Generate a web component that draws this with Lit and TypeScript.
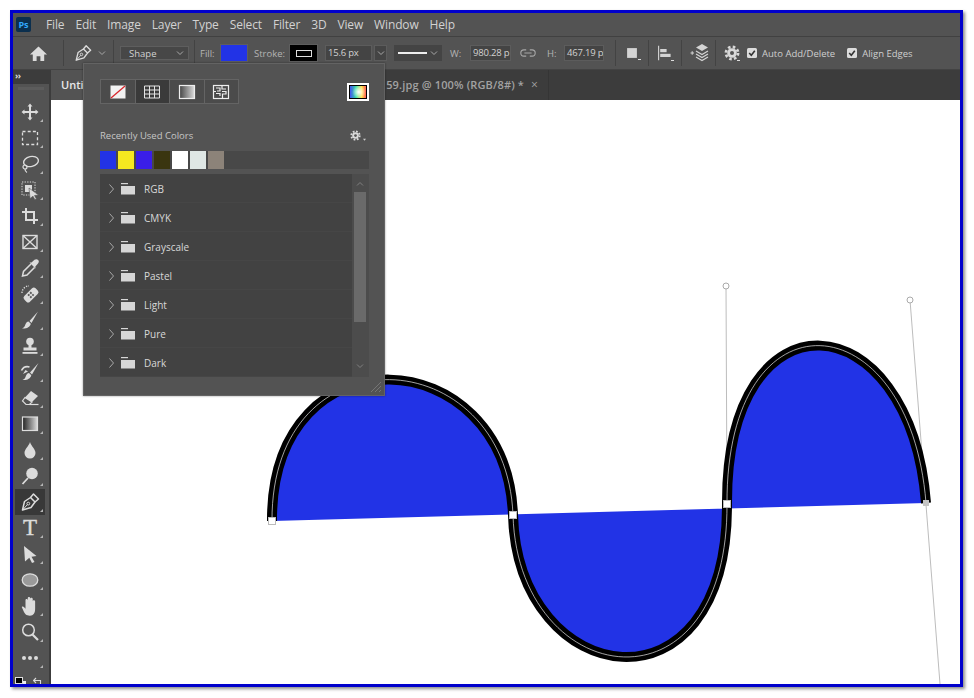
import { LitElement, html, css, svg } from 'lit';
import { customElement } from 'lit/decorators.js';

const MENUS = ['File', 'Edit', 'Image', 'Layer', 'Type', 'Select', 'Filter', '3D', 'View', 'Window', 'Help'];
const RECENT = ['#2233e6', '#f5e820', '#3a1ee8', '#3a3510', '#ffffff', '#dfe7e4', '#8c8379'];
const GROUPS = ['RGB', 'CMYK', 'Grayscale', 'Pastel', 'Light', 'Pure', 'Dark'];

const icon = (body: unknown, size = 20) => html`<svg class="ico" width=${size} height=${size} viewBox="0 0 20 20">${body}</svg>`;

const PEN = svg`
  <path d="M2.5 18 L4.5 9.5 L10.5 5.5 L15 10 L11 15.5 Z" fill="none" stroke="currentColor" stroke-width="1.5" stroke-linejoin="round"/>
  <path d="M3 17.5 L7.5 12.5" stroke="currentColor" stroke-width="1"/>
  <circle cx="8.3" cy="11.6" r="1.4" fill="none" stroke="currentColor"/>
  <path d="M10.5 5.5 L13.5 2 L18.5 7 L15 10" fill="none" stroke="currentColor" stroke-width="1.5" stroke-linejoin="round"/>`;

const TOOLS = [
  // move
  svg`<path d="M10 1.5 L12.5 4.5 H11 V9 H15.5 V7.5 L18.5 10 L15.5 12.5 V11 H11 V15.5 H12.5 L10 18.5 L7.5 15.5 H9 V11 H4.5 V12.5 L1.5 10 L4.5 7.5 V9 H9 V4.5 H7.5 Z" fill="currentColor"/>`,
  // marquee
  svg`<rect x="2.5" y="3.5" width="15" height="13" fill="none" stroke="currentColor" stroke-width="1.3" stroke-dasharray="3 2.2"/>`,
  // lasso
  svg`<ellipse cx="11" cy="7.5" rx="7.5" ry="5" transform="rotate(-12 11 7.5)" fill="none" stroke="currentColor" stroke-width="1.4"/><circle cx="5" cy="13" r="2" fill="none" stroke="currentColor" stroke-width="1.2"/><path d="M5 15 C5 17 6 18 7 18.5" fill="none" stroke="currentColor" stroke-width="1.2"/>`,
  // object selection
  svg`<rect x="2" y="2" width="13" height="13" fill="none" stroke="currentColor" stroke-width="1" stroke-dasharray="1.3 1.3"/><rect x="5" y="5" width="7" height="7" fill="currentColor"/><path d="M9 8 L18.5 15 L14.5 15.5 L16.5 19 L14.8 19.5 L13 16.2 L10 18.5 Z" fill="currentColor" stroke="#535353" stroke-width=".6"/>`,
  // crop
  svg`<path d="M6 2 V14 H18 M2 6 H14 V18" fill="none" stroke="currentColor" stroke-width="2"/>`,
  // frame
  svg`<rect x="3" y="3.5" width="14" height="13" fill="none" stroke="currentColor" stroke-width="1.4"/><path d="M3 3.5 L17 16.5 M17 3.5 L3 16.5" stroke="currentColor" stroke-width="1.4"/>`,
  // eyedropper
  svg`<path d="M11 6 L3.5 13.5 L2.5 18 L7 17 L14.5 9.5" fill="none" stroke="currentColor" stroke-width="1.5"/><path d="M9.5 4.5 L11.5 4.5 L14.5 1.8 C15.7 .9 17.2 1 18.2 2 C19.2 3.2 19 4.4 18 5.4 L15.4 8.4 L15.5 10.5 Z" fill="currentColor"/>`,
  // healing brush
  svg`<g transform="rotate(-45 11 11)"><rect x="3" y="7" width="16" height="8" rx="2.5" fill="currentColor"/><rect x="8.5" y="8.5" width="1.8" height="1.8" fill="#535353"/><rect x="11.5" y="8.5" width="1.8" height="1.8" fill="#535353"/><rect x="8.5" y="11.5" width="1.8" height="1.8" fill="#535353"/><rect x="11.5" y="11.5" width="1.8" height="1.8" fill="#535353"/></g><path d="M2 9 A7 7 0 0 1 9 2" fill="none" stroke="currentColor" stroke-width="1.3" stroke-dasharray="1.3 1.3"/>`,
  // brush
  svg`<path d="M18 1.5 L9.5 11 L11.5 13 Z" fill="currentColor"/><path d="M8.5 11.5 C5.5 12 5.5 15 4.5 16.5 C3.8 17.5 3 18 2 18.5 C6 19 10 17.5 10.8 13.8 Z" fill="currentColor"/>`,
  // stamp
  svg`<circle cx="10" cy="5.5" r="3.8" fill="currentColor"/><path d="M8.5 8 H11.5 V11.5 H16.5 V14.5 H3.5 V11.5 H8.5 Z" fill="currentColor"/><rect x="2.5" y="16" width="15" height="1.8" fill="currentColor"/>`,
  // mixer brush
  svg`<path d="M18.5 1 L10 10.5 L12 12.5 Z" fill="currentColor"/><path d="M9 11 C6 11.5 6 14.5 5 16 C4.4 17 3.5 17.5 2.5 18 C6.5 18.5 10.5 17 11.3 13.3 Z" fill="currentColor"/><path d="M1.5 8.5 C3 5.5 6 4 9.5 5" fill="none" stroke="currentColor" stroke-width="1.6"/><path d="M3 12 L5.5 8 L8 9.5 Z" fill="currentColor"/>`,
  // eraser
  svg`<path d="M11 3 L18 8 L12 14 L5 9.5 Z" fill="currentColor"/><path d="M5 9.5 L12 14 L9.5 16.5 H6 L2.5 13 Z" fill="none" stroke="currentColor" stroke-width="1.2"/><path d="M9.5 16.5 H18.5" stroke="currentColor" stroke-width="1.2"/>`,
  // gradient
  svg`<defs><linearGradient id="toolgrad"><stop offset="0" stop-color="#222"/><stop offset="1" stop-color="#ddd"/></linearGradient></defs><rect x="2.5" y="3" width="15" height="13.5" fill="url(#toolgrad)" stroke="#ddd" stroke-width="1.2"/>`,
  // blur
  svg`<path d="M10 2 C11 6 15.5 9 15.5 13 A5.5 5.5 0 0 1 4.5 13 C4.5 9 9 6 10 2 Z" fill="currentColor"/>`,
  // dodge
  svg`<circle cx="12" cy="7.5" r="5.8" fill="currentColor"/><path d="M8 12 L2.5 18" stroke="currentColor" stroke-width="1.8"/>`,
  // pen
  PEN,
  // type, drawn as text below
  null,
  // path selection
  svg`<path d="M4 2 L16.5 12 L11.5 12.8 L14.5 18 L12 19 L9.3 13.8 L5 17.5 Z" fill="currentColor"/>`,
  // ellipse
  svg`<ellipse cx="10" cy="10" rx="7.8" ry="6.2" fill="#9a9a9a" stroke="currentColor" stroke-width="1.3"/>`,
  // hand
  svg`<path d="M3 10.5 C4 9.5 5 10.5 6 12 V5 C6 3.8 7.6 3.8 7.8 5 V9 V3.5 C7.8 2.2 9.6 2.2 9.8 3.5 V9 V4 C9.8 2.8 11.6 2.8 11.8 4 V9.5 V6 C11.8 4.8 13.6 4.8 13.7 6 V12 C13.7 15.5 12.5 17.5 9.5 17.5 C6.5 17.5 5.5 16 4.5 14 Z" fill="currentColor" transform="translate(-2 -2.2) scale(1.25)"/>`,
  // zoom
  svg`<circle cx="8.5" cy="8" r="5.8" fill="none" stroke="currentColor" stroke-width="1.5"/><path d="M12.5 12.5 L18 18" stroke="currentColor" stroke-width="2.2"/>`,
  // more
  svg`<circle cx="4" cy="10" r="2" fill="currentColor"/><circle cx="10" cy="10" r="2" fill="currentColor"/><circle cx="16" cy="10" r="2" fill="currentColor"/>`,
];

const CHEVRON = svg`<path d="M2 3.5 L5 6.5 L8 3.5" fill="none" stroke="currentColor" stroke-width="1"/>`;
const CHECK = svg`<rect x="0" y="0" width="10" height="10" rx="1.5" fill="#dcdcdc"/><path d="M2.2 5 L4.3 7.2 L7.8 2.8" fill="none" stroke="#333" stroke-width="1.6"/>`;

const chevron = () => html`<svg class="chev" width="10" height="10" viewBox="0 0 10 10">${CHEVRON}</svg>`;
const check = () => html`<svg class="check" width="10" height="10" viewBox="0 0 10 10">${CHECK}</svg>`;

@customElement('app-root')
export class AppRoot extends LitElement {
  static styles = css`
    :host {
      display: block;
      padding: 10px;
      font-family: "Open Sans", "Liberation Sans", sans-serif;
      color: #d2d2d2;
    }
    .frame {
      position: relative;
      box-sizing: border-box;
      width: 953px;
      height: 677px;
      border: 3px solid #0000cc;
      box-shadow: 2px 2px 3px rgba(0, 0, 0, .45);
      background: #535353;
      overflow: hidden;
      display: flex;
      flex-direction: column;
    }
    .ico { display: block; flex: none; color: #dcdcdc; }
    .chev { display: block; flex: none; color: #a8a8a8; }
    .check { display: block; flex: none; }

    .menubar {
      height: 24px;
      flex: none;
      box-sizing: border-box;
      display: flex;
      align-items: center;
      border-bottom: 1px solid #414141;
      font-size: 12px;
      letter-spacing: -.15px;
    }
    .logo {
      width: 15px;
      height: 15px;
      margin: 0 15px 0 3px;
      border-radius: 2px;
      background: #0b2f4e;
      color: #31a8ff;
      font: 700 9px/15px "Open Sans", sans-serif;
      text-align: center;
    }
    .menus { display: flex; gap: 11px; }

    .options {
      height: 33px;
      flex: none;
      display: flex;
      align-items: center;
      border-bottom: 1px solid #434343;
      font-size: 9.5px;
      box-sizing: border-box;
    }
    .sep { width: 1px; height: 26px; background: #434343; flex: none; }
    .cell { flex: none; display: flex; align-items: center; justify-content: center; position: relative; }
    .home { width: 50px; }
    .pen { width: 49px; gap: 5px; padding-left: 3px; box-sizing: border-box; }
    .shape {
      width: 69px;
      height: 14px;
      margin: 0 5px 0 6px;
      padding: 0 3px 0 8px;
      box-sizing: border-box;
      background: #474747;
      border: 1px solid #5e5e5e;
      display: flex;
      align-items: center;
      justify-content: space-between;
      flex: none;
    }
    .lbl { flex: none; color: #b4b4b4; white-space: nowrap; }
    .fill-lbl { width: 21px; margin-left: 5px; }
    .fill-swatch { width: 26px; height: 16px; background: #2233e6; flex: none; outline: 1px solid #5e5e5e; }
    .stroke-lbl { width: 36px; margin-left: 7px; }
    .stroke-swatch {
      width: 27px;
      height: 16px;
      flex: none;
      background: #000;
      outline: 1px solid #5e5e5e;
      display: flex;
      align-items: center;
      justify-content: center;
    }
    .stroke-swatch::after { content: ""; width: 14px; height: 5px; border: 1px solid #ddd; }
    .field {
      height: 16px;
      flex: none;
      box-sizing: border-box;
      background: #444;
      outline: 1px solid #5c5c5c;
      outline-offset: -1px;
      padding: 0 0 0 3px;
      line-height: 16px;
      letter-spacing: -.2px;
      color: #d2d2d2;
      white-space: nowrap;
    }
    .stroke-width { width: 47px; margin-left: 8px; }
    .stroke-drop { width: 13px; height: 16px; margin-left: 2px; background: #444; outline: 1px solid #5c5c5c; outline-offset: -1px; }
    .line-drop {
      width: 48px;
      height: 16px;
      margin-left: 7px;
      background: #444;
      gap: 2px;
    }
    .line-drop::before { content: ""; width: 29px; height: 2px; background: #eee; }
    .w-lbl { width: 20px; margin-left: 8px; }
    .w-field { width: 41px; }
    .link { width: 18px; margin-left: 8px; }
    .h-lbl { width: 17px; margin-left: 10px; }
    .h-field { width: 40px; margin-right: 11px; }
    .sq { width: 32px; }
    .st { width: 33px; }
    .gear { width: 31px; }
    .marker::after {
      content: "";
      position: absolute;
      right: 7px;
      bottom: 0;
      width: 3px;
      height: 1px;
      background: #ddd;
    }
    .auto-lbl { margin: 0 12px 0 5px; color: #cfcfcf; }
    .edges-lbl { margin-left: 5px; color: #cfcfcf; }

    .main { flex: 1; display: flex; min-height: 0; }
    .toolbar {
      width: 38px;
      flex: none;
      box-sizing: border-box;
      border-right: 2px solid #3c3c3c;
      background: #535353;
      display: flex;
      flex-direction: column;
      overflow: hidden;
    }
    .tool-head {
      height: 14px;
      flex: none;
      background: #3c3c3c;
      color: #dcdcdc;
      font-size: 9px;
      font-weight: 700;
      line-height: 11px;
      padding-left: 2px;
      letter-spacing: -.5px;
    }
    .grip { height: 15px; flex: none; display: flex; align-items: flex-start; justify-content: center; padding-top: 3px; box-sizing: border-box; }
    .grip::before { content: ""; width: 26px; height: 3px; background: #5c5c5c; }
    .tool {
      position: relative;
      height: 26px;
      width: 30px;
      margin-left: 2px;
      flex: none;
      display: flex;
      align-items: center;
      justify-content: center;
    }
    .tool::after {
      content: "";
      position: absolute;
      right: 2px;
      bottom: 3px;
      border-left: 3px solid transparent;
      border-bottom: 3px solid #b5b5b5;
    }
    .tool.on { background: #383838; }
    .type-glyph { font: 400 23px/26px "Liberation Serif", serif; color: #dcdcdc; -webkit-text-stroke: .4px #dcdcdc; }
    .swatches {
      flex: none;
      display: flex;
      gap: 7px;
      padding: 6px 0 0 2px;
      align-items: flex-start;
    }

    .work { flex: 1; min-width: 0; display: flex; flex-direction: column; }
    .tabs {
      height: 30px;
      flex: none;
      display: flex;
      background: #3c3c3c;
      font-size: 11px;
      font-weight: 600;
      line-height: 30px;
      white-space: nowrap;
    }
    .tab { box-sizing: border-box; overflow: hidden; display: flex; justify-content: flex-end; align-items: center; }
    .tab.active { width: 110px; justify-content: flex-start; padding-left: 10px; background: #535353; color: #e8e8e8; }
    .tab.other { width: 388px; padding-right: 10px; color: #a2a2a2; border-right: 1px solid #353535; letter-spacing: .15px; }
    .close { margin-left: 7px; font-weight: 400; font-size: 12px; }
    .canvas { flex: 1; background: #fff; min-height: 0; }
    .canvas svg { display: block; }

    .popup {
      position: absolute;
      left: 70px;
      top: 50px;
      width: 302px;
      height: 333px;
      box-sizing: border-box;
      padding: 15px 15px 0 16px;
      background: #535353;
      border: 1px solid #636363;
      box-shadow: 0 0 2px rgba(0, 0, 0, .4);
      display: flex;
      flex-direction: column;
    }
    .modes { display: flex; justify-content: space-between; align-items: center; height: 25px; flex: none; }
    .mode-group { display: flex; border: 1px solid #646464; }
    .mode { width: 33.5px; height: 23px; display: flex; align-items: center; justify-content: center; border-left: 1px solid #646464; background: #4b4b4b; }
    .mode:first-child { border-left: 0; }
    .mode.on { background: #3a3a3a; }
    .picker {
      width: 22px;
      height: 18px;
      box-sizing: border-box;
      border: 2px solid #fff;
      box-shadow: inset 0 0 0 1px #000;
      background:
        radial-gradient(circle at 55% 50%, #fff 0, rgba(255, 255, 255, 0) 55%),
        linear-gradient(to right, #4a3cff, #30e0a0 40%, #ffe040 70%, #ff4060);
    }
    .recent-head {
      flex: none;
      margin-top: 24px;
      height: 14px;
      display: flex;
      justify-content: space-between;
      align-items: center;
      font-size: 9.5px;
      color: #c6c6c6;
    }
    .recent-gear { display: flex; align-items: flex-end; gap: 2px; margin-right: 3px; }
    .recent {
      flex: none;
      margin-top: 9px;
      height: 18px;
      background: #484848;
      display: flex;
      gap: 2px;
    }
    .chip { width: 16px; height: 18px; }
    .list { flex: none; margin-top: 5px; height: 203px; display: flex; background: #4c4c4c; overflow: hidden; }
    .rows { width: 252px; flex: none; background: #424242; }
    .row {
      height: 29px;
      box-sizing: border-box;
      display: flex;
      align-items: center;
      padding: 1px 0 0 9px;
      border-bottom: 1px solid #464646;
      font-size: 10px;
      color: #d8d8d8;
    }
    .row .chevr { margin-right: 7px; color: #a8a8a8; }
    .row .folder { margin-right: 9px; flex: none; display: block; }
    .scroll { flex: 1; position: relative; display: flex; flex-direction: column; align-items: center; padding-top: 18px; }
    .thumb { width: 12px; height: 130px; background: #6a6a6a; margin-left: -2px; }
    .arrow { position: absolute; left: 3px; color: #808080; }
    .arrow.up { top: 5px; transform: scaleY(-1); }
    .arrow.down { bottom: 6px; }
    .resize { position: absolute; right: 2px; bottom: 2px; color: #757575; }
  `;

  private renderOptionsBar() {
    return html`
      <div class="options">
        <div class="cell home">${icon(svg`<path d="M10 2.5 L19 11 H16 V18 H12 V13 H8 V18 H4 V11 H1 Z" fill="currentColor"/>`, 19)}</div>
        <div class="sep"></div>
        <div class="cell pen">${icon(PEN, 18)}${chevron()}</div>
        <div class="sep"></div>
        <div class="shape"><span>Shape</span>${chevron()}</div>
        <div class="sep"></div>
        <div class="lbl fill-lbl">Fill:</div>
        <div class="fill-swatch"></div>
        <div class="lbl stroke-lbl">Stroke:</div>
        <div class="stroke-swatch"></div>
        <div class="field stroke-width">15.6 px</div>
        <div class="cell stroke-drop">${chevron()}</div>
        <div class="cell line-drop">${chevron()}</div>
        <div class="lbl w-lbl">W:</div>
        <div class="field w-field">980.28 p</div>
        <div class="cell link">${icon(svg`<path d="M8 6.5 H5.5 A3.5 3.5 0 0 0 5.5 13.5 H8 M12 6.5 H14.5 A3.5 3.5 0 0 1 14.5 13.5 H12 M6 10 H14" fill="none" stroke="#a8a8a8" stroke-width="1.2"/>`, 18)}</div>
        <div class="lbl h-lbl">H:</div>
        <div class="field h-field">467.19 p</div>
        <div class="sep"></div>
        <div class="cell sq marker">${icon(svg`<rect x="3" y="3" width="14" height="14" fill="#d4d4d4"/>`, 14)}</div>
        <div class="sep"></div>
        <div class="cell sq marker">${icon(svg`<path d="M2 1 V19" stroke="#d4d4d4" stroke-width="1.4"/><rect x="4" y="5" width="8" height="4" fill="#d4d4d4"/><rect x="4" y="11" width="13" height="4" fill="#d4d4d4"/>`, 16)}</div>
        <div class="sep"></div>
        <div class="cell st">${icon(svg`<path d="M1.5 10 H5 M3.2 8.2 V11.8" stroke="#d4d4d4" stroke-width="1"/><path d="M13 1 L19 4.5 L13 8 L7 4.5 Z" fill="#d4d4d4"/><path d="M7 8 L13 11.5 L19 8 M7 11 L13 14.5 L19 11 M7 14 L13 17.5 L19 14" fill="none" stroke="#d4d4d4" stroke-width="1.2"/>`)}</div>
        <div class="sep"></div>
        <div class="cell gear marker">${this.renderGear(16)}</div>
        ${check()}
        <div class="auto-lbl">Auto Add/Delete</div>
        ${check()}
        <div class="edges-lbl">Align Edges</div>
      </div>
    `;
  }

  private renderGear(size: number) {
    return icon(svg`
      <circle cx="10" cy="10" r="6" fill="#d8d8d8"/>
      <circle cx="10" cy="10" r="7.6" fill="none" stroke="#d8d8d8" stroke-width="3.4" stroke-dasharray="3.2 2.77"/>
      <circle cx="10" cy="10" r="2.5" fill="#535353"/>`, size);
  }

  private renderToolbar() {
    return html`
      <div class="toolbar">
        <div class="tool-head">››</div>
        <div class="grip"></div>
        ${TOOLS.map((body, i) => html`
          <div class="tool ${i === 15 ? 'on' : ''}">
            ${body ? icon(body) : html`<span class="type-glyph">T</span>`}
          </div>
        `)}
        <div class="swatches">
          <svg class="check" width="11" height="10" viewBox="0 0 11 10"><rect x="4" y="4" width="7" height="6" fill="#eee"/><rect x=".5" y=".5" width="7" height="6" fill="#000" stroke="#ddd"/></svg>
          <svg class="check" width="9" height="10" viewBox="0 0 9 10"><path d="M3 1 L.5 3.5 L3 6 M1 3.5 H7.5 V9" fill="none" stroke="#ddd" stroke-width="1.1"/></svg>
        </div>
      </div>
    `;
  }

  private renderPopup() {
    return html`
      <div class="popup">
        <div class="modes">
          <div class="mode-group">
            <div class="mode">${icon(svg`<rect x="2.5" y="3.5" width="15" height="13" fill="#f2f2f2"/><path d="M3 16 L17 4" stroke="#d8262c" stroke-width="1.3"/>`)}</div>
            <div class="mode on">${icon(svg`<path d="M2.5 4 H17.5 V16 H2.5 Z M2.5 8 H17.5 M2.5 12 H17.5 M7.5 4 V16 M12.5 4 V16" fill="none" stroke="#e4e4e4" stroke-width="1"/>`)}</div>
            <div class="mode">${icon(svg`<defs><linearGradient id="modegrad"><stop offset="0" stop-color="#444"/><stop offset="1" stop-color="#ddd"/></linearGradient></defs><rect x="2.5" y="3.5" width="15" height="13" fill="url(#modegrad)" stroke="#eee" stroke-width="1.2"/>`)}</div>
            <div class="mode">${icon(svg`<rect x="2.5" y="3.5" width="15" height="13" fill="none" stroke="#eee" stroke-width="1.2"/><path d="M5 6 H9 V9 H6 M11 3.5 V7 H15 M5 11.5 H9 V14 M11 9.5 H15 V12 H11.5 V16 M3 9.5 H5" fill="none" stroke="#eee" stroke-width="1.2"/>`)}</div>
          </div>
          <div class="picker"></div>
        </div>
        <div class="recent-head">
          <span>Recently Used Colors</span>
          <span class="recent-gear">${this.renderGear(11)}<svg class="chev" width="3" height="3" viewBox="0 0 4 4"><path d="M0 1 H4 L2 3.5 Z" fill="#ccc"/></svg></span>
        </div>
        <div class="recent">
          ${RECENT.map((c) => html`<div class="chip" style="background:${c}"></div>`)}
        </div>
        <div class="list">
          <div class="rows">
            ${GROUPS.map((name) => html`
              <div class="row">
                <svg class="chevr" width="5" height="10" viewBox="0 0 5 10"><path d="M.5 .5 L4.5 5 L.5 9.5" fill="none" stroke="currentColor"/></svg>
                <svg class="folder" width="14" height="12" viewBox="0 0 14 12"><rect x="0" y="3" width="14" height="8.5" fill="#d6d6d6"/><rect x="0" y="0" width="7" height="1.2" fill="#d6d6d6"/></svg>
                ${name}
              </div>
            `)}
          </div>
          <div class="scroll">
            <svg class="arrow up" width="10" height="10" viewBox="0 0 10 10">${CHEVRON}</svg>
            <div class="thumb"></div>
            <svg class="arrow down" width="10" height="10" viewBox="0 0 10 10">${CHEVRON}</svg>
          </div>
        </div>
        <svg class="resize" width="12" height="12" viewBox="0 0 12 12"><path d="M1 11 L11 1 M5 11 L11 5 M9 11 L11 9" stroke="currentColor"/></svg>
      </div>
    `;
  }

  private renderCanvas() {
    const wave = 'M272 521 C271 327 506 340 513 515 C518 690 728 722 727 504 C726 286 910 300 926 503';
    const anchors = [[272, 521], [513, 515], [727, 504]];
    return html`
      <div class="canvas">
        <svg width="909" height="584" viewBox="51 100 909 584">
          <path d="M726 286 L727 504 M910 300 L940 684" fill="none" stroke="#bdbdbd" stroke-width="1"/>
          <path d=${wave + ' Z'} fill="#2233e6"/>
          <path d=${wave} fill="none" stroke="#000" stroke-width="10"/>
          <path d=${wave} fill="none" stroke="#e6e6e6" stroke-width=".7"/>
          <circle cx="726" cy="286" r="3" fill="#fff" stroke="#aaa"/>
          <circle cx="910" cy="300" r="3" fill="#fff" stroke="#aaa"/>
          ${anchors.map(([x, y]) => svg`<rect x=${x - 3.5} y=${y - 3.5} width="7" height="7" fill="#fff" stroke="#bbb"/>`)}
          <rect x="923" y="500" width="6" height="6" fill="#c4c4c4"/>
        </svg>
      </div>
    `;
  }

  render() {
    return html`
      <div class="frame">
        <div class="menubar">
          <div class="logo">Ps</div>
          <div class="menus">${MENUS.map((m) => html`<span>${m}</span>`)}</div>
        </div>
        ${this.renderOptionsBar()}
        <div class="main">
          ${this.renderToolbar()}
          <div class="work">
            <div class="tabs">
              <div class="tab active">Untitled-1</div>
              <div class="tab other">Wave 59.jpg @ 100% (RGB/8#) * <span class="close">×</span></div>
            </div>
            ${this.renderCanvas()}
          </div>
        </div>
        ${this.renderPopup()}
      </div>
    `;
  }
}
